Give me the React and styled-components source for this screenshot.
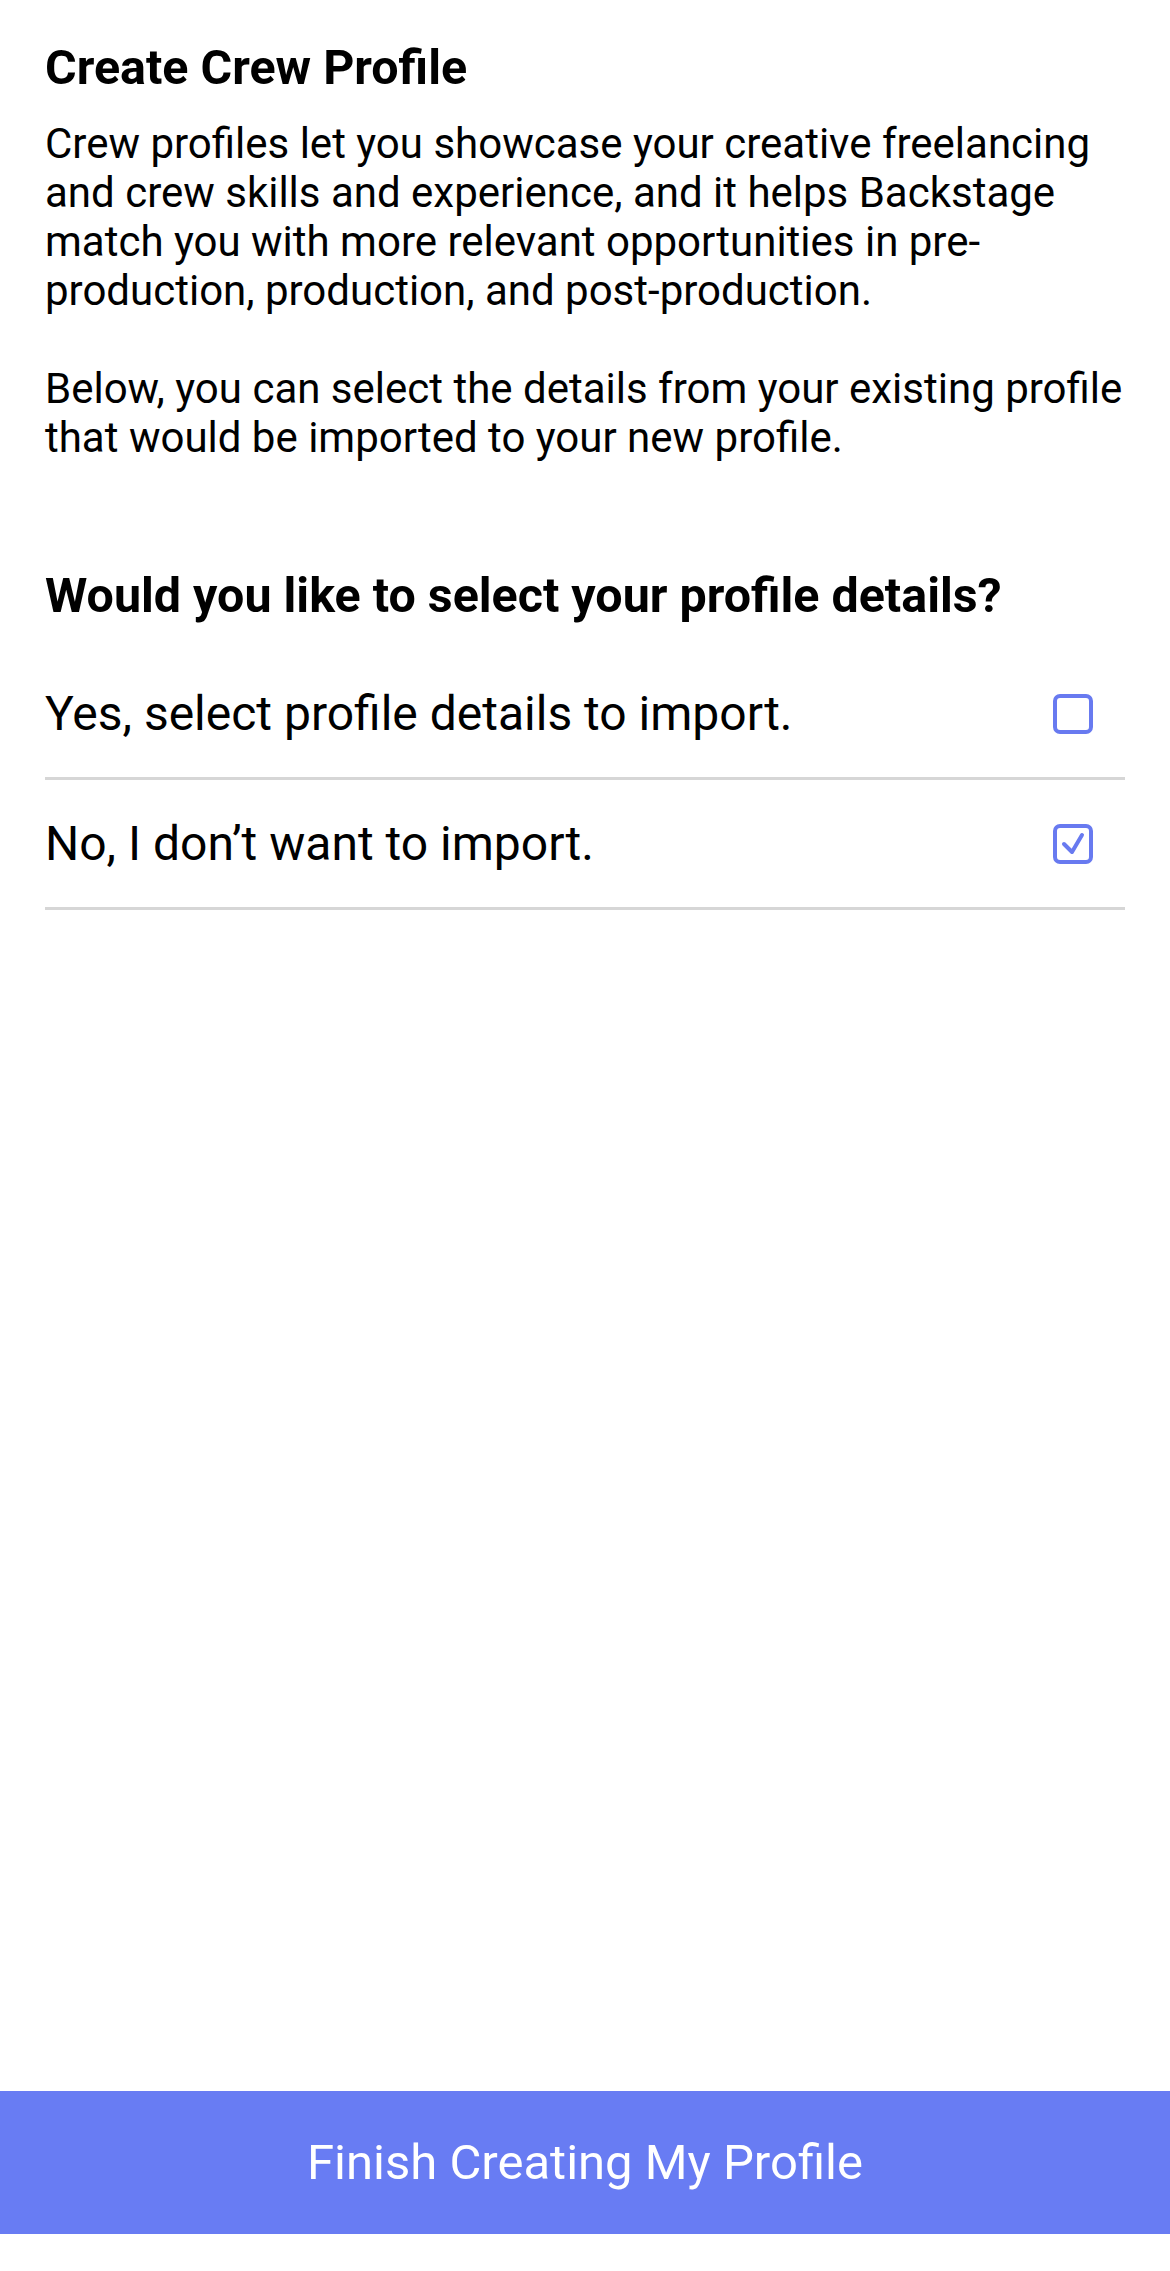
import React, { useState } from "react";
import styled, { createGlobalStyle } from "styled-components";

const GlobalStyle = createGlobalStyle`
  html, body {
    margin: 0;
    padding: 0;
    background: #ffffff;
  }
  body {
    font-family: Roboto, "Liberation Sans", Arial, sans-serif;
    color: #000000;
    -webkit-font-smoothing: antialiased;
  }
  * { box-sizing: border-box; }
`;

const Page = styled.div`
  width: 1170px;
  min-height: 2271px;
  display: flex;
  flex-direction: column;
  background: #ffffff;
`;

const Content = styled.main`
  flex: 1;
  padding: 40px 45px 0;
  display: flex;
  flex-direction: column;
`;

const Title = styled.h1`
  margin: 0;
  font-size: 48.4px;
  line-height: 56px;
  font-weight: 700;
`;

const Paragraph = styled.p`
  margin: ${(p) => (p.$first ? "23px" : "49px")} 0 0;
  font-size: 42px;
  line-height: 49px;
  font-weight: 400;
`;

const Question = styled.h2`
  margin: 106px 0 0;
  font-size: 48.4px;
  line-height: 56px;
  font-weight: 700;
`;

const OptionList = styled.ul`
  list-style: none;
  margin: 26px 0 0;
  padding: 0;
`;

const OptionRow = styled.li`
  height: 130px;
  display: flex;
  align-items: center;
  justify-content: space-between;
  border-bottom: 3px solid #d6d6d6;
  cursor: pointer;
`;

const OptionLabel = styled.span`
  font-size: 48px;
  line-height: 56px;
  font-weight: 400;
`;

const Box = styled.span`
  width: 40px;
  height: 40px;
  margin-right: 32px;
  border: 4px solid #687af0;
  border-radius: 7px;
  display: flex;
  align-items: center;
  justify-content: center;
  flex-shrink: 0;
`;

const Footer = styled.footer`
  padding-bottom: 37px;
`;

const SubmitButton = styled.button`
  width: 100%;
  height: 143px;
  border: none;
  margin: 0;
  padding: 0;
  background: #687cf3;
  color: #ffffff;
  font-family: Roboto, "Liberation Sans", Arial, sans-serif;
  font-size: 49px;
  font-weight: 400;
  display: block;
  cursor: pointer;
`;

function Checkbox({ checked }) {
  return (
    <Box>
      {checked && (
        <svg width="32" height="32" viewBox="0 0 32 32" fill="none">
          <polyline
            points="7,16 15,24 25,7"
            stroke="#687af0"
            strokeWidth="4"
            strokeLinecap="round"
            strokeLinejoin="round"
          />
        </svg>
      )}
    </Box>
  );
}

const options = [
  { id: "yes", label: "Yes, select profile details to import." },
  { id: "no", label: "No, I don\u2019t want to import." },
];

export default function App() {
  const [selected, setSelected] = useState("no");
  return (
    <>
      <GlobalStyle />
      <Page>
        <Content>
          <Title>Create Crew Profile</Title>
          <Paragraph $first>
            Crew profiles let you showcase your creative freelancing and crew
            skills and experience, and it helps Backstage match you with more
            relevant opportunities in pre-production, production, and
            post-production.
          </Paragraph>
          <Paragraph>
            Below, you can select the details from your existing profile that
            would be imported to your new profile.
          </Paragraph>
          <Question>Would you like to select your profile details?</Question>
          <OptionList>
            {options.map((o) => (
              <OptionRow key={o.id} onClick={() => setSelected(o.id)}>
                <OptionLabel>{o.label}</OptionLabel>
                <Checkbox checked={selected === o.id} />
              </OptionRow>
            ))}
          </OptionList>
        </Content>
        <Footer>
          <SubmitButton>Finish Creating My Profile</SubmitButton>
        </Footer>
      </Page>
    </>
  );
}
